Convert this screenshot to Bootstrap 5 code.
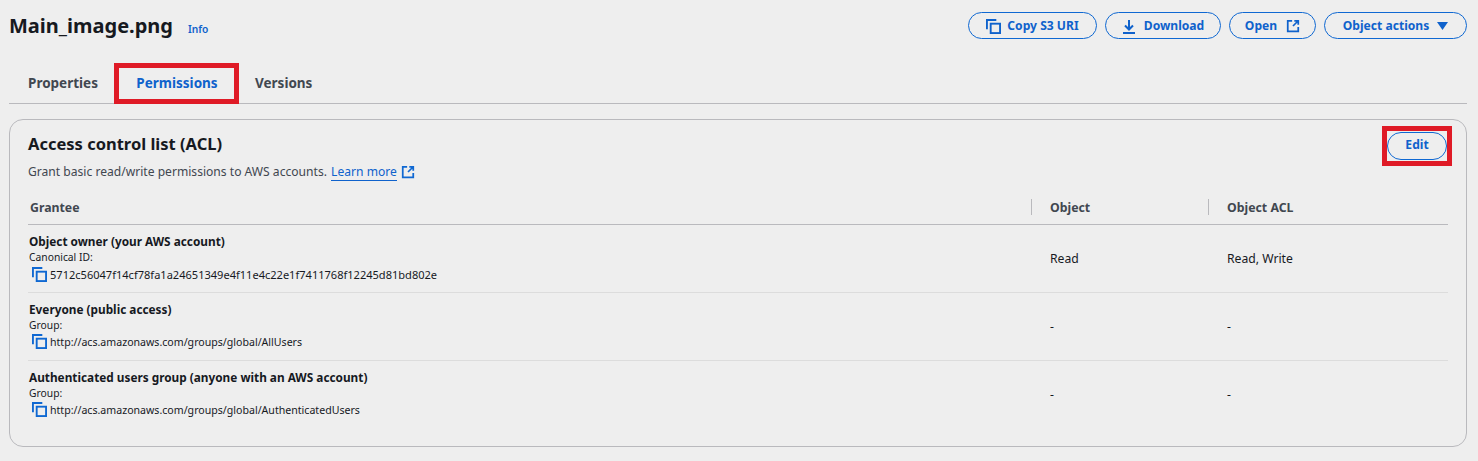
<!DOCTYPE html>
<html lang="en">
<head>
  <meta charset="UTF-8">
  <meta name="viewport" content="width=device-width, initial-scale=1.0">
  <title>Main_image.png</title>
  <link href="https://cdn.jsdelivr.net/npm/bootstrap@5.3.0/dist/css/bootstrap.min.css" rel="stylesheet">
  <style>
    body {
      background-color: #eeeeee;
      color: #16191f;
      font-family: "Noto Sans", "Open Sans", sans-serif;
      font-size: 13px;
      padding: 12px 11px 0 9px;
      overflow: hidden;
    }
    .page-title { font-size: 20px; font-weight: 700; line-height: 27px; margin: 0; }
    .info-link { color: #0f62cc; font-size: 10.2px; font-weight: 600; text-decoration: none; margin-left: 15px; position: relative; top: 4px; }
    .aws-btn {
      height: 27px;
      border: 1px solid #0f68d2;
      border-radius: 14px;
      color: #0f62cc;
      background: transparent;
      font-size: 12.1px;
      font-weight: 700;
      padding: 1px 0 0;
      display: flex;
      align-items: center;
      justify-content: center;
      gap: 7px;
    }
    .btn-copy { width: 129px; gap: 6px; }
    .btn-download { width: 116px; gap: 8px; }
    .btn-open { width: 87px; gap: 9px; }
    .btn-actions { width: 143px; gap: 8px; }
    .aws-icon { fill: none; stroke: currentColor; stroke-width: 2; flex: none; }
    .tab-row { margin-top: 24px; height: 41px; border-bottom: 1px solid #b9b9bd; padding-left: 19px; }
    .tab-item { color: #414750; font-size: 13.5px; font-weight: 700; line-height: 40px; text-decoration: none; }
    .tab-props { width: 86px; }
    .tab-perms { width: 125px; height: 41px; border: 5px solid #df1a26; color: #0f62cc; text-align: center; line-height: 30px; padding-left: 1px; }
    .tab-vers { margin-left: 16px; }
    .acl-panel { margin-top: 15px; height: 328px; border: 1px solid #b9b9bd; border-radius: 14px; padding: 6px 14px 0 18px; }
    .panel-head { height: 41px; }
    .panel-title { font-size: 16.5px; font-weight: 700; line-height: 24px; margin: 6px 0 0; }
    .edit-mark { border: 5px solid #df1a26; width: 70px; height: 40px; display: flex; align-items: center; }
    .btn-edit { width: 60px; height: 28px; padding: 0 0 2px; }
    .panel-desc { color: #414750; font-size: 12.1px; line-height: 18px; margin: -4px 0 0; }
    .panel-desc a { color: #0f62cc; margin-left: 1px; text-decoration: none; border-bottom: 1px solid #0f62cc; }
    .panel-desc svg { color: #0f68d2; margin-left: 1px; vertical-align: -3px; }
    .acl-table { margin: 9px 0 0; width: 1420px; table-layout: fixed; --bs-table-bg: transparent; }
    .acl-table th { height: 34px; padding: 2px 0 0 2px; vertical-align: middle; color: #414750; font-size: 12.3px; font-weight: 700; border-bottom: 1px solid #b9b9bd; }
    .acl-table th.col-sep { padding-left: 19px; position: relative; }
    .acl-table th.col-sep::before { content: ""; position: absolute; left: 0; top: 9px; height: 16px; border-left: 1px solid #b9b9bd; }
    .acl-table td { height: 68px; padding: 2px 0 0 19px; vertical-align: middle; color: #16191f; font-size: 12.2px; border-bottom: 1px solid #dcdcdc; }
    .acl-table tr:last-child td { border-bottom: 0; }
    .acl-table td.grantee-cell { padding: 7px 0 0 1px; vertical-align: top; }
    .grantee-name { font-size: 11.8px; font-weight: 700; line-height: 18px; }
    .grantee-label { font-size: 10.3px; line-height: 15px; }
    .grantee-id { font-size: 10.6px; line-height: 18px; margin-left: 3px; gap: 3px; }
    .grantee-hash { font-size: 11.05px; margin-top: 1px; }
    .grantee-id svg { color: #0f68d2; }
  </style>
</head>
<body>
  <svg width="0" height="0" class="position-absolute">
    <symbol id="copy-icon" viewBox="0 0 16 16">
      <path d="M1 11V1h10"/><rect x="5" y="5" width="10" height="10"/>
    </symbol>
    <symbol id="ext-icon" viewBox="0 0 16 16">
      <path d="M7 2H2v12h12V9"/><path d="M9.500 2H14v4.500M14 2L8 8"/>
    </symbol>
  </svg>

  <div class="d-flex justify-content-between align-items-center">
    <div class="d-flex align-items-center">
      <h1 class="page-title">Main_image.png</h1>
      <a href="#" class="info-link">Info</a>
    </div>
    <div class="d-flex gap-2">
      <button class="aws-btn btn-copy"><svg class="aws-icon" width="15" height="15"><use href="#copy-icon"/></svg>Copy S3 URI</button>
      <button class="aws-btn btn-download">
        <svg class="aws-icon" width="14" height="15" viewBox="0 0 14 15"><path d="M7 1v9M3 6.500l4 4 4-4M1 14h12"/></svg>Download</button>
      <button class="aws-btn btn-open">Open<svg class="aws-icon" width="14" height="14"><use href="#ext-icon"/></svg></button>
      <button class="aws-btn btn-actions">Object actions
        <svg width="11" height="8" viewBox="0 0 11 8"><path d="M0 0h11L5.500 8z" fill="currentColor"/></svg></button>
    </div>
  </div>

  <div class="tab-row d-flex">
    <a href="#" class="tab-item tab-props">Properties</a>
    <a href="#" class="tab-item tab-perms">Permissions</a>
    <a href="#" class="tab-item tab-vers">Versions</a>
  </div>

  <div class="acl-panel">
    <div class="panel-head d-flex justify-content-between align-items-start">
      <h2 class="panel-title">Access control list (ACL)</h2>
      <div class="edit-mark"><button class="aws-btn btn-edit">Edit</button></div>
    </div>
    <p class="panel-desc">Grant basic read/write permissions to AWS accounts. <a href="#">Learn more</a>
      <svg class="aws-icon" width="14" height="14"><use href="#ext-icon"/></svg></p>

    <table class="table acl-table">
      <colgroup><col style="width: 1003px"><col style="width: 177px"><col></colgroup>
      <thead>
        <tr><th>Grantee</th><th class="col-sep">Object</th><th class="col-sep">Object ACL</th></tr>
      </thead>
      <tbody>
        <tr>
          <td class="grantee-cell">
            <div class="grantee-name">Object owner (your AWS account)</div>
            <div class="grantee-label">Canonical ID:</div>
            <div class="grantee-id d-flex align-items-center"><svg class="aws-icon" width="15" height="15"><use href="#copy-icon"/></svg><span class="grantee-hash">5712c56047f14cf78fa1a24651349e4f11e4c22e1f7411768f12245d81bd802e</span></div>
          </td>
          <td>Read</td>
          <td>Read, Write</td>
        </tr>
        <tr>
          <td class="grantee-cell">
            <div class="grantee-name">Everyone (public access)</div>
            <div class="grantee-label">Group:</div>
            <div class="grantee-id d-flex align-items-center"><svg class="aws-icon" width="15" height="15"><use href="#copy-icon"/></svg>http://acs.amazonaws.com/groups/global/AllUsers</div>
          </td>
          <td>-</td>
          <td>-</td>
        </tr>
        <tr>
          <td class="grantee-cell">
            <div class="grantee-name">Authenticated users group (anyone with an AWS account)</div>
            <div class="grantee-label">Group:</div>
            <div class="grantee-id d-flex align-items-center"><svg class="aws-icon" width="15" height="15"><use href="#copy-icon"/></svg>http://acs.amazonaws.com/groups/global/AuthenticatedUsers</div>
          </td>
          <td>-</td>
          <td>-</td>
        </tr>
      </tbody>
    </table>
  </div>

  <script src="https://cdn.jsdelivr.net/npm/bootstrap@5.3.0/dist/js/bootstrap.bundle.min.js"></script>
</body>
</html>
